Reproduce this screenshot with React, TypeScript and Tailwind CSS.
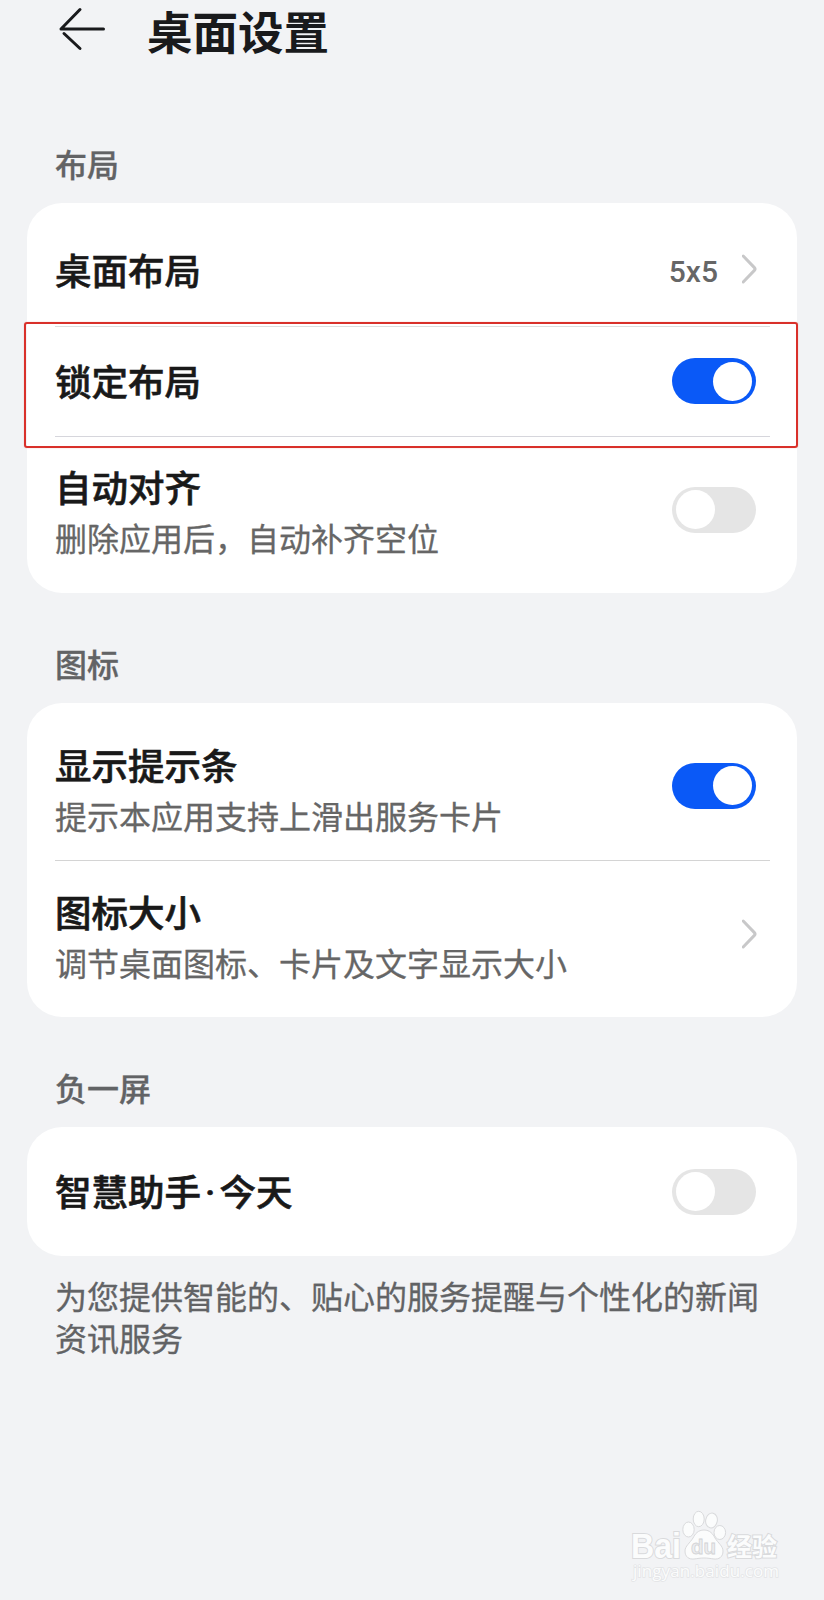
import type { ReactNode } from "react";

/** Switch — công tắc bật / tắt, nút tròn nằm bên phải khi bật. */
function Switch({ on }: { on?: boolean }) {
  return (
    <span
      role="switch"
      aria-checked={!!on}
      className={
        on
          ? "flex h-[46px] w-[84px] shrink-0 items-center justify-end rounded-full bg-[#0a59f7] px-1"
          : "flex h-[46px] w-[84px] shrink-0 items-center justify-start rounded-full bg-[#e5e5e5] px-1"
      }
    >
      <span className="size-[39px] rounded-full bg-white" />
    </span>
  );
}

function Chevron() {
  return (
    <svg className="-mr-0.5 h-[30px] w-4 shrink-0" viewBox="0 0 16 30" fill="none">
      <path
        d="M1.200 2 L12.400 13.600 Q13.800 15 12.400 16.400 L1.200 28"
        stroke="#c8c8c9"
        strokeWidth="3"
        strokeLinecap="round"
      />
    </svg>
  );
}

function SectionTitle({ children }: { children: ReactNode }) {
  return (
    <h2 className="mb-5 px-[55px] text-[32px] leading-10 font-medium text-[#626365] [-webkit-text-stroke:0.3px]">
      {children}
    </h2>
  );
}

function Card({ children }: { children: ReactNode }) {
  return (
    <section className="relative mx-[27px] rounded-[35px] bg-white py-3 pr-[27px] pl-7">
      {children}
    </section>
  );
}

type RowProps = {
  title: ReactNode;
  desc?: string;
  className: string;
  children: ReactNode;
};

function Row({ title, desc, className, children }: RowProps) {
  return (
    <div className={`flex items-center justify-between pr-[14px] ${className}`}>
      <div className={desc ? "pt-1.5" : ""}>
        <div className="text-[36.5px] leading-[52px] font-medium text-[#191919] [-webkit-text-stroke:0.6px]">
          {title}
        </div>
        {desc && (
          <div className="text-[32px] leading-[48px] text-[#666] [-webkit-text-stroke:0.3px]">{desc}</div>
        )}
      </div>
      {children}
    </div>
  );
}

/** Watermark — logo dấu chân và địa chỉ trang ở góc phải dưới. */
function Watermark() {
  return (
    <svg
      className="absolute top-[1505px] left-[624px] h-[80px] w-[164px]"
      viewBox="0 0 164 80"
      fill="#fbfcfc"
      stroke="#d9dadc"
      strokeWidth="1"
    >
      <text
        x="7"
        y="52.500"
        fontSize="35"
        textLength="50"
        lengthAdjust="spacingAndGlyphs"
        paintOrder="stroke"
        strokeWidth="2"
        className="font-['Liberation_Sans',sans-serif] font-bold"
      >
        Bai
      </text>
      <ellipse cx="64.500" cy="24.500" rx="5.700" ry="7.500" />
      <ellipse cx="74.700" cy="14" rx="5.500" ry="7.700" />
      <ellipse cx="87.500" cy="15.500" rx="5.800" ry="7.500" transform="rotate(12 87.5 15.5)" />
      <ellipse cx="95.800" cy="27.500" rx="5.800" ry="7" />
      <path d="M80 25c6 0 9 4 11 8 3 5 8 8 8 13 0 6-4 8.500-9 8-4-.5-6-1-10-1s-6 .5-10 1c-5 .5-9-2-9-8 0-5 5-8 8-13 2-4 5-8 11-8z" />
      <text
        x="67"
        y="49"
        fontSize="21"
        textLength="25"
        lengthAdjust="spacingAndGlyphs"
        className="font-['Liberation_Sans',sans-serif] font-bold"
        fill="#ecedef"
        stroke="#d2d3d5"
        strokeWidth="0.8"
      >
        du
      </text>
      <text
        x="103"
        y="50.500"
        fontSize="25"
        paintOrder="stroke"
        strokeWidth="2"
        className="font-['Noto_Sans_CJK_SC',sans-serif] font-bold"
      >
        经验
      </text>
      <text
        x="9"
        y="72"
        fontSize="17"
        textLength="146"
        strokeWidth="1.500"
        stroke="#e3e4e6"
        paintOrder="stroke"
        className="font-['Open_Sans',sans-serif]"
      >
        jingyan.baidu.com
      </text>
    </svg>
  );
}

export default function App() {
  return (
    <main className="relative h-[1600px] w-[824px] overflow-hidden bg-[#f2f3f5] font-['Noto_Sans_CJK_SC',sans-serif]">
      <header className="mb-[81px] flex h-[62px] items-center pl-[58px]">
        <svg className="mb-1 h-[44px] w-12" viewBox="0 0 48 44" fill="none">
          <path
            d="M45.500 22H3L22 2.500M6 26.500L22 41.500"
            stroke="#191a1c"
            strokeWidth="3"
            strokeLinecap="round"
            strokeLinejoin="round"
          />
        </svg>
        <h1 className="mb-0.5 ml-[41px] text-[45.5px] leading-[58px] font-bold text-[#191a1c]">桌面设置</h1>
      </header>

      <SectionTitle>布局</SectionTitle>
      <Card>
        <Row title="桌面布局" className="h-[111px] pb-0.5">
          <div className="flex items-center gap-6 pb-0.5">
            <span className="pt-1.5 font-['Roboto',sans-serif] text-[30px] leading-9 font-medium text-[#666]">5x5</span>
            <Chevron />
          </div>
        </Row>
        <Row title="锁定布局" className="h-[110px] border-t border-[#dedede] pb-px">
          <Switch on />
        </Row>
        <Row title="自动对齐" desc="删除应用后，自动补齐空位" className="h-[145px] border-t border-[#d6d6dc] pb-0.5">
          <div className="pt-[3px]">
            <Switch />
          </div>
        </Row>
        <div className="absolute top-[119px] -left-[3px] h-[126px] w-[774px] rounded-[3px] border-2 border-[#d9302a] shadow-[0_0_1px_#e8837f]" />
      </Card>

      <div className="h-[50px]" />
      <SectionTitle>图标</SectionTitle>
      <Card>
        <Row title="显示提示条" desc="提示本应用支持上滑出服务卡片" className="h-[145px] pb-1">
          <Switch on />
        </Row>
        <Row title="图标大小" desc="调节桌面图标、卡片及文字显示大小" className="h-[145px] border-t border-[#d4d4d4]">
          <div className="pt-0.5">
            <Chevron />
          </div>
        </Row>
      </Card>

      <div className="h-[50px]" />
      <SectionTitle>负一屏</SectionTitle>
      <Card>
        <Row
          title={
            <div className="pt-0.5">
              智慧助手<span className="inline-block w-[18.5px] text-center font-['Roboto',sans-serif]">·</span>今天
            </div>
          }
          className="h-[105px]"
        >
          <Switch />
        </Row>
      </Card>
      <p className="mt-[18px] px-[55px] text-[32px] leading-[42px] text-[#626365] [-webkit-text-stroke:0.3px]">
        为您提供智能的、贴心的服务提醒与个性化的新闻资讯服务
      </p>

      <Watermark />
    </main>
  );
}
